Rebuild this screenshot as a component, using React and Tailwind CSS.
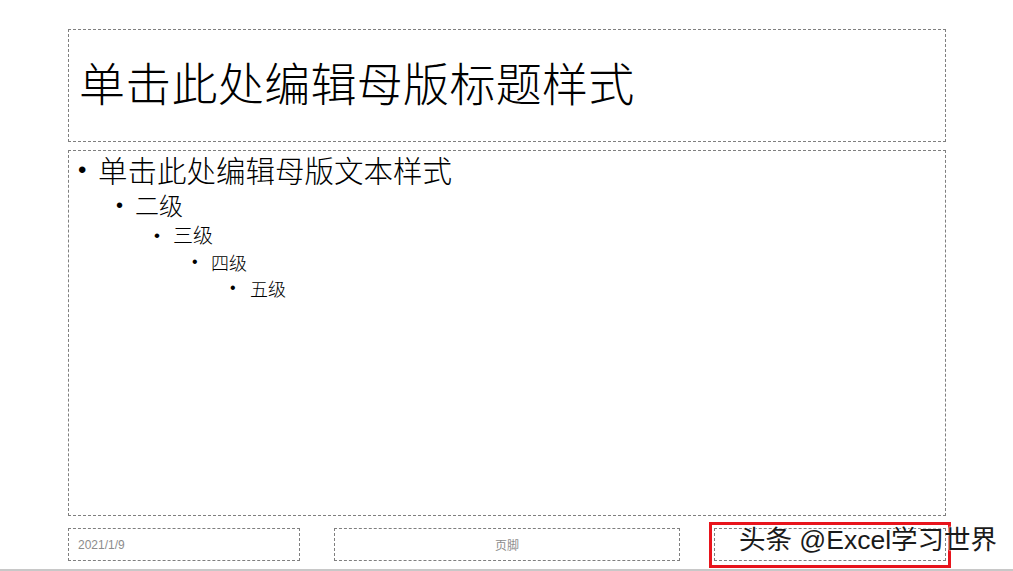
import React from "react";

const levels = [
  { text: "单击此处编辑母版文本样式", indent: "pl-[9px]", size: "text-[29.5px]", h: "h-[36px]", dot: "text-[24px] w-[20px]" },
  { text: "二级", indent: "pl-[47px]", size: "text-[24px]", h: "h-[34px]", dot: "text-[20px] w-[19px]" },
  { text: "三级", indent: "pl-[85px]", size: "text-[20px]", h: "h-[26px]", dot: "text-[17px] w-[19px]" },
  { text: "四级", indent: "pl-[123px]", size: "text-[18px]", h: "h-[28px]", dot: "text-[16px] w-[19px]" },
  { text: "五级", indent: "pl-[161px]", size: "text-[18px]", h: "h-[24px]", dot: "text-[16px] w-[20px]" },
];

const cjk = "font-['Noto_Sans_CJK_SC','Noto_Sans',sans-serif]";

export default function App() {
  return (
    <div className={`relative w-[1013px] h-[571px] bg-white border-b-2 border-[#c8c8c8] ${cjk}`}>
      <div className="flex flex-col gap-[8px] pt-[29px] pl-[68px] pr-[67px]">
        {/* title placeholder */}
        <div className="h-[113px] border border-dashed border-[#7f7f7f] flex items-center pl-[10px] pb-[9px]">
          <span className="text-[46px] font-extralight text-black leading-none tracking-[0.3px]">
            单击此处编辑母版标题样式
          </span>
        </div>

        {/* body placeholder */}
        <div className="h-[366px] border border-dashed border-[#7f7f7f] pt-[1px]">
          {levels.map((l) => (
            <div key={l.text} className={`flex items-center ${l.indent} ${l.h}`}>
              <span className={`${l.dot} leading-none text-black font-['Liberation_Sans',sans-serif]`}>•</span>
              <span className={`${l.size} font-light leading-none text-black`}>{l.text}</span>
            </div>
          ))}
        </div>

        {/* footer placeholders */}
        <div className="flex gap-[34px] mt-[4px] h-[33px]">
          <div className="w-[232px] border border-dashed border-[#7f7f7f] flex items-center pl-[9px]">
            <span className="text-[12px] text-[#8c8c8c] font-['Liberation_Sans',sans-serif]">2021/1/9</span>
          </div>
          <div className="w-[346px] border border-dashed border-[#7f7f7f] flex items-center justify-center">
            <span className="text-[12px] text-[#8c8c8c]">页脚</span>
          </div>
          <div className="w-[232px] border border-dashed border-[#7f7f7f]" />
        </div>
      </div>

      {/* watermark highlight */}
      <div className="absolute left-[709px] top-[522px] w-[242px] h-[46px] border-[3px] border-[#e8141c]" />
      <div className="absolute left-[739px] top-[521px] text-[26.5px] leading-[38px] text-[#1a1a1a] whitespace-nowrap font-['Liberation_Sans','Noto_Sans_CJK_SC',sans-serif] [text-shadow:0_0_2px_#fff,0_0_2px_#fff,0_0_1px_#fff]">
        头条 @Excel学习世界
      </div>
    </div>
  );
}
